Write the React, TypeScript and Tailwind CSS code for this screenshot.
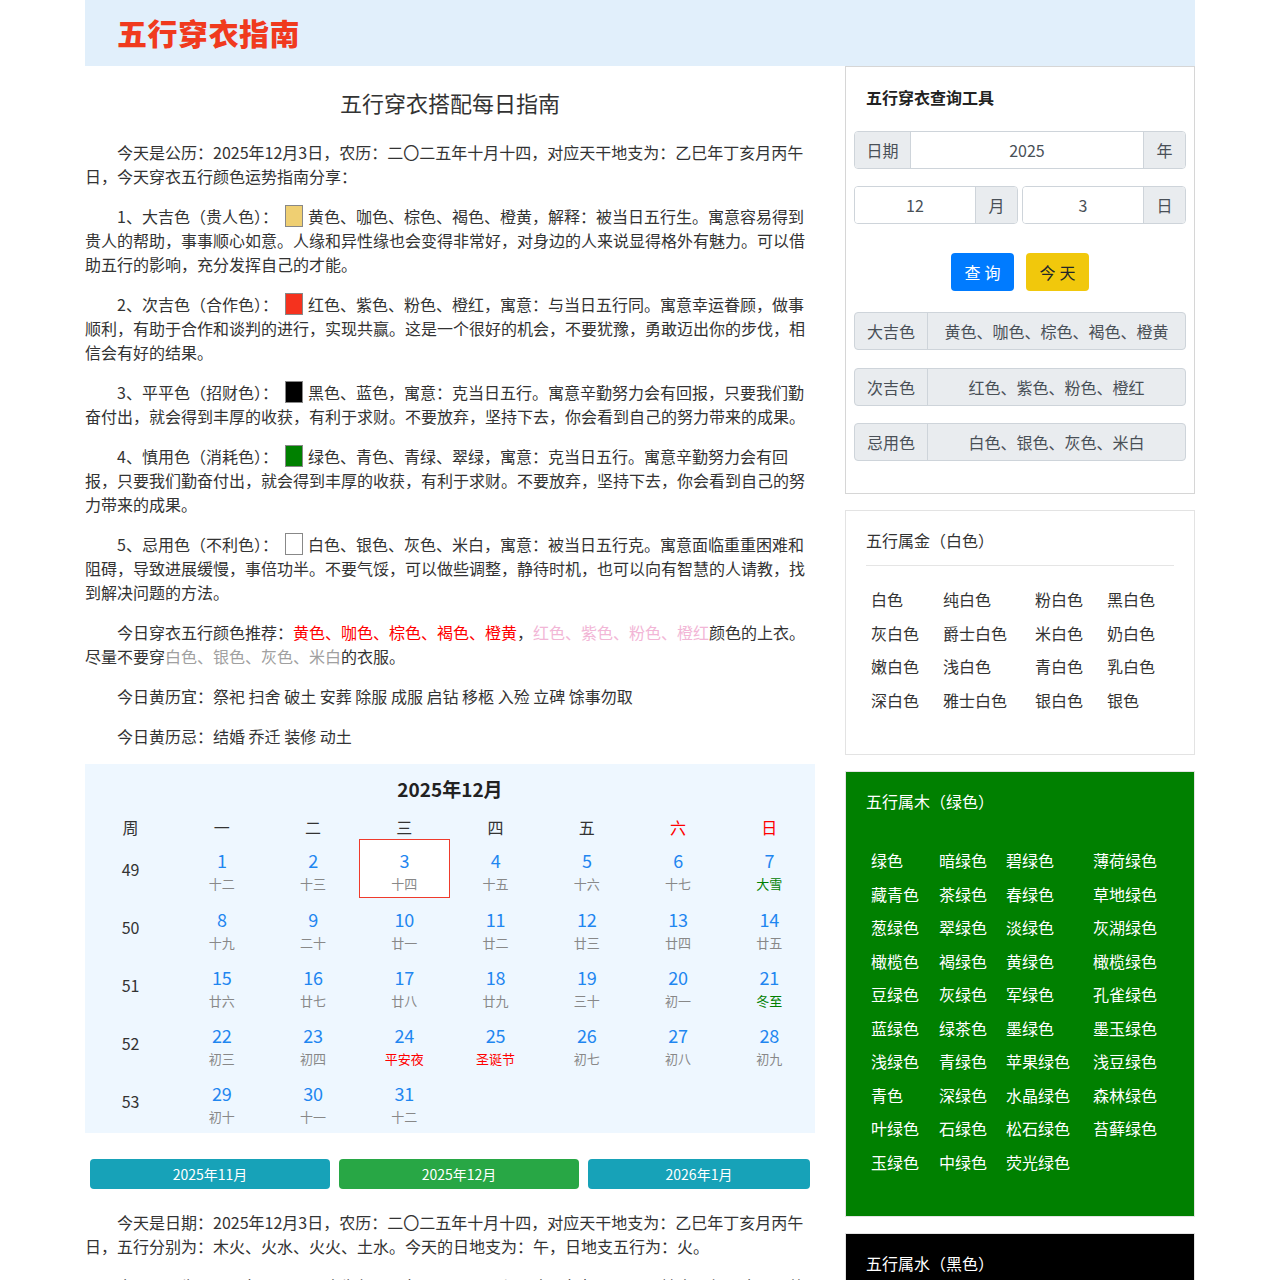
import React from "react";

const FONT = "font-['Noto_Sans_CJK_SC','Noto_Sans',sans-serif]";

type Day = { d: number; l: string; c?: string; today?: boolean };

const weeks: { w: number; days: (Day | null)[] }[] = [
  {
    w: 49,
    days: [
      { d: 1, l: "十二" },
      { d: 2, l: "十三" },
      { d: 3, l: "十四", today: true },
      { d: 4, l: "十五" },
      { d: 5, l: "十六" },
      { d: 6, l: "十七" },
      { d: 7, l: "大雪", c: "text-[#008000]" },
    ],
  },
  {
    w: 50,
    days: [
      { d: 8, l: "十九" },
      { d: 9, l: "二十" },
      { d: 10, l: "廿一" },
      { d: 11, l: "廿二" },
      { d: 12, l: "廿三" },
      { d: 13, l: "廿四" },
      { d: 14, l: "廿五" },
    ],
  },
  {
    w: 51,
    days: [
      { d: 15, l: "廿六" },
      { d: 16, l: "廿七" },
      { d: 17, l: "廿八" },
      { d: 18, l: "廿九" },
      { d: 19, l: "三十" },
      { d: 20, l: "初一" },
      { d: 21, l: "冬至", c: "text-[#008000]" },
    ],
  },
  {
    w: 52,
    days: [
      { d: 22, l: "初三" },
      { d: 23, l: "初四" },
      { d: 24, l: "平安夜", c: "text-[#ff0000]" },
      { d: 25, l: "圣诞节", c: "text-[#ff0000]" },
      { d: 26, l: "初七" },
      { d: 27, l: "初八" },
      { d: 28, l: "初九" },
    ],
  },
  {
    w: 53,
    days: [
      { d: 29, l: "初十" },
      { d: 30, l: "十一" },
      { d: 31, l: "十二" },
      null,
      null,
      null,
      null,
    ],
  },
];

const whiteItems = [
  "白色", "纯白色", "粉白色", "黑白色",
  "灰白色", "爵士白色", "米白色", "奶白色",
  "嫩白色", "浅白色", "青白色", "乳白色",
  "深白色", "雅士白色", "银白色", "银色",
];

const greenItems = [
  "绿色", "暗绿色", "碧绿色", "薄荷绿色",
  "藏青色", "茶绿色", "春绿色", "草地绿色",
  "葱绿色", "翠绿色", "淡绿色", "灰湖绿色",
  "橄榄色", "褐绿色", "黄绿色", "橄榄绿色",
  "豆绿色", "灰绿色", "军绿色", "孔雀绿色",
  "蓝绿色", "绿茶色", "墨绿色", "墨玉绿色",
  "浅绿色", "青绿色", "苹果绿色", "浅豆绿色",
  "青色", "深绿色", "水晶绿色", "森林绿色",
  "叶绿色", "石绿色", "松石绿色", "苔藓绿色",
  "玉绿色", "中绿色", "荧光绿色",
];

function Swatch({ color }: { color: string }) {
  return (
    <span
      className={`inline-block w-[18px] h-[22px] align-top mt-[1px] ml-[7px] mr-[5px] border border-[#888888] ${color}`}
    />
  );
}

function P({ children }: { children: React.ReactNode }) {
  return (
    <p className="indent-[2em] text-[16px] leading-[24px] text-[#333333] mb-[16px] pr-[8px]">
      {children}
    </p>
  );
}

function Calendar() {
  const heads = ["周", "一", "二", "三", "四", "五", "六", "日"];
  return (
    <div className="bg-[#eef7ff] pt-[12px] pb-[3px]">
      <div className="text-center text-[19px] font-bold leading-[26px] text-[#222222]">
        2025年12月
      </div>
      <div className="grid grid-cols-8 mt-[13px]">
        {heads.map((h, i) => (
          <div
            key={h}
            className={`text-center text-[16px] leading-[24px] ${
              i >= 6 ? "text-[#ff0000]" : "text-[#333333]"
            }`}
          >
            {h}
          </div>
        ))}
      </div>
      {weeks.map((wk, wi) => (
        <div key={wk.w} className={`grid grid-cols-8 ${wi === 0 ? "h-[59px]" : "h-[58px]"}`}>
          <div className="flex items-center justify-center text-[16px] text-[#333333]">
            {wk.w}
          </div>
          {wk.days.map((day, i) =>
            day ? (
              <div
                key={i}
                className={`flex flex-col items-center pt-[8px] ${
                  day.today ? "bg-white shadow-[inset_0_0_0_1px_#ef3b2c]" : ""
                }`}
              >
                <div className="text-[18px] leading-[26px] text-[#1f86f0]">{day.d}</div>
                <div
                  className={`text-[13px] leading-[18px] mt-[2px] ${day.c ?? "text-[#888888]"}`}
                >
                  {day.l}
                </div>
              </div>
            ) : (
              <div key={i} />
            )
          )}
        </div>
      ))}
    </div>
  );
}

function InputGroup({
  children,
  className = "",
}: {
  children: React.ReactNode;
  className?: string;
}) {
  return (
    <div
      className={`flex h-[38px] border border-[#ced4da] rounded-[4px] overflow-hidden text-[16px] text-[#495057] ${className}`}
    >
      {children}
    </div>
  );
}

function Addon({ children, w }: { children: React.ReactNode; w: string }) {
  return (
    <div className={`${w} shrink-0 bg-[#e9ecef] flex items-center justify-center`}>
      {children}
    </div>
  );
}

function ResultRow({ label, value, className }: { label: string; value: string; className: string }) {
  return (
    <div
      className={`flex h-[38px] border border-[#ced4da] rounded-[4px] overflow-hidden bg-[#e9ecef] text-[16px] text-[#495057] ${className}`}
    >
      <div className="w-[73px] shrink-0 flex items-center justify-center border-r border-[#ced4da]">
        {label}
      </div>
      <div className="flex-1 flex items-center justify-center">{value}</div>
    </div>
  );
}

function ColorCard({
  title,
  items,
  cols,
  bg,
  text,
  hr,
  className,
}: {
  title: string;
  items: string[];
  cols: string;
  bg: string;
  text: string;
  hr: string;
  className: string;
}) {
  return (
    <div className={`border border-[#e3e3e3] px-[20px] pt-[17px] pb-[37px] ${bg} ${className}`}>
      <div className={`text-[16px] leading-[24px] ${text}`}>{title}</div>
      <div className={`h-px mt-[13px] ${hr}`} />
      <div className={`grid ${cols} mt-[17px]`}>
        {items.map((it) => (
          <div key={it} className={`pl-[5px] text-[16px] leading-[33.5px] whitespace-nowrap ${text}`}>
            {it}
          </div>
        ))}
      </div>
    </div>
  );
}

export default function App() {
  return (
    <div className={`${FONT} bg-white min-h-[1280px]`}>
      <div className="w-[1110px] mx-auto">
        <header className="h-[66px] bg-[#e1effb] pl-[32px] flex items-center">
          <h1 className="text-[30px] font-black text-[#f03a1e] tracking-[0.5px] leading-none -mt-[2px]">
            五行穿衣指南
          </h1>
        </header>
        <div className="flex gap-[30px] items-start">
          {/* left column */}
          <div className="w-[730px] shrink-0">
            <h2 className="text-center text-[22px] leading-[28px] text-[#333333] mt-[22px] mb-[24px]">
              五行穿衣搭配每日指南
            </h2>
            <P>
              今天是公历：2025年12月3日，农历：二〇二五年十月十四，对应天干地支为：乙巳年丁亥月丙午日，今天穿衣五行颜色运势指南分享：
            </P>
            <P>
              1、大吉色（贵人色）：
              <Swatch color="bg-[#efcf72]" />
              黄色、咖色、棕色、褐色、橙黄，解释：被当日五行生。寓意容易得到贵人的帮助，事事顺心如意。人缘和异性缘也会变得非常好，对身边的人来说显得格外有魅力。可以借助五行的影响，充分发挥自己的才能。
            </P>
            <P>
              2、次吉色（合作色）：
              <Swatch color="bg-[#f5321e]" />
              红色、紫色、粉色、橙红，寓意：与当日五行同。寓意幸运眷顾，做事顺利，有助于合作和谈判的进行，实现共赢。这是一个很好的机会，不要犹豫，勇敢迈出你的步伐，相信会有好的结果。
            </P>
            <P>
              3、平平色（招财色）：
              <Swatch color="bg-black" />
              黑色、蓝色，寓意：克当日五行。寓意辛勤努力会有回报，只要我们勤奋付出，就会得到丰厚的收获，有利于求财。不要放弃，坚持下去，你会看到自己的努力带来的成果。
            </P>
            <P>
              4、慎用色（消耗色）：
              <Swatch color="bg-[#008000]" />
              绿色、青色、青绿、翠绿，寓意：克当日五行。寓意辛勤努力会有回报，只要我们勤奋付出，就会得到丰厚的收获，有利于求财。不要放弃，坚持下去，你会看到自己的努力带来的成果。
            </P>
            <P>
              5、忌用色（不利色）：
              <Swatch color="bg-white" />
              白色、银色、灰色、米白，寓意：被当日五行克。寓意面临重重困难和阻碍，导致进展缓慢，事倍功半。不要气馁，可以做些调整，静待时机，也可以向有智慧的人请教，找到解决问题的方法。
            </P>
            <P>
              今日穿衣五行颜色推荐：
              <span className="text-[#ff0000]">黄色、咖色、棕色、褐色、橙黄</span>，
              <span className="text-[#f2b6d6]">红色、紫色、粉色、橙红</span>
              颜色的上衣。尽量不要穿
              <span className="text-[#a0a0a0]">白色、银色、灰色、米白</span>
              的衣服。
            </P>
            <P>今日黄历宜：祭祀 扫舍 破土 安葬 除服 成服 启钻 移柩 入殓 立碑 馀事勿取</P>
            <P>今日黄历忌：结婚 乔迁 装修 动土</P>

            <Calendar />

            <div className="flex gap-[9px] px-[5px] mt-[26px]">
              <button className="w-[240px] h-[30px] rounded-[4px] bg-[#17a2b8] text-white text-[14px]">
                2025年11月
              </button>
              <button className="w-[240px] h-[30px] rounded-[4px] bg-[#28a745] text-white text-[14px]">
                2025年12月
              </button>
              <button className="flex-1 h-[30px] rounded-[4px] bg-[#17a2b8] text-white text-[14px]">
                2026年1月
              </button>
            </div>
            <div className="mt-[21px]">
              <P>
                今天是日期：2025年12月3日，农历：二〇二五年十月十四，对应天干地支为：乙巳年丁亥月丙午日，五行分别为：木火、火水、火火、土水。今天的日地支为：午，日地支五行为：火。
              </P>
              <P>
                今天日干为<span className="text-[#ff0000]">丙</span>，五行属火，日支为午，五行属火，日干与日支五行相同，天干地支同气，今日运势较为平稳，适合穿着<span className="text-[#ff0000]">黄色</span>系的衣服。
              </P>
            </div>
          </div>

          {/* right column */}
          <div className="w-[350px] shrink-0">
            <div className="border border-[#d6d6d6] px-[8px] pb-[32px]">
              <div className="mt-[18px] pl-[12px] text-[16px] font-bold leading-[24px] text-[#222222]">
                五行穿衣查询工具
              </div>
              <InputGroup className="mt-[22px]">
                <Addon w="w-[56px] border-r border-[#ced4da]">日期</Addon>
                <div className="flex-1 flex items-center justify-center bg-white">2025</div>
                <Addon w="w-[42px] border-l border-[#ced4da]">年</Addon>
              </InputGroup>
              <div className="flex gap-[4px] mt-[17px]">
                <InputGroup className="flex-1">
                  <div className="flex-1 flex items-center justify-center bg-white">12</div>
                  <Addon w="w-[42px] border-l border-[#ced4da]">月</Addon>
                </InputGroup>
                <InputGroup className="flex-1">
                  <div className="flex-1 flex items-center justify-center bg-white">3</div>
                  <Addon w="w-[42px] border-l border-[#ced4da]">日</Addon>
                </InputGroup>
              </div>
              <div className="flex justify-center gap-[12px] mt-[29px]">
                <button className="w-[63px] h-[38px] rounded-[4px] bg-[#007bff] text-white text-[16px] tracking-[4px] pl-[4px]">
                  查询
                </button>
                <button className="w-[63px] h-[38px] rounded-[4px] bg-[#f1c80c] text-[#212529] text-[16px] tracking-[4px] pl-[4px]">
                  今天
                </button>
              </div>
              <ResultRow className="mt-[21px]" label="大吉色" value="黄色、咖色、棕色、褐色、橙黄" />
              <ResultRow className="mt-[18px]" label="次吉色" value="红色、紫色、粉色、橙红" />
              <ResultRow className="mt-[17px]" label="忌用色" value="白色、银色、灰色、米白" />
            </div>

            <ColorCard
              className="mt-[16px]"
              title="五行属金（白色）"
              items={whiteItems}
              cols="grid-cols-[72px_92px_72px_1fr]"
              bg="bg-white"
              text="text-[#333333]"
              hr="bg-[#e5e5e5]"
            />
            <ColorCard
              className="mt-[16px]"
              title="五行属木（绿色）"
              items={greenItems}
              cols="grid-cols-[68px_67px_87px_1fr]"
              bg="bg-[#008000]"
              text="text-white"
              hr="bg-[#008000]"
            />
            <ColorCard
              className="mt-[16px]"
              title="五行属水（黑色）"
              items={["黑色", "深黑色", "墨色", "乌黑色", "蓝色", "深蓝色", "藏蓝色", "海蓝色"]}
              cols="grid-cols-[68px_67px_87px_1fr]"
              bg="bg-black"
              text="text-white"
              hr="bg-black"
            />
          </div>
        </div>
      </div>
    </div>
  );
}
